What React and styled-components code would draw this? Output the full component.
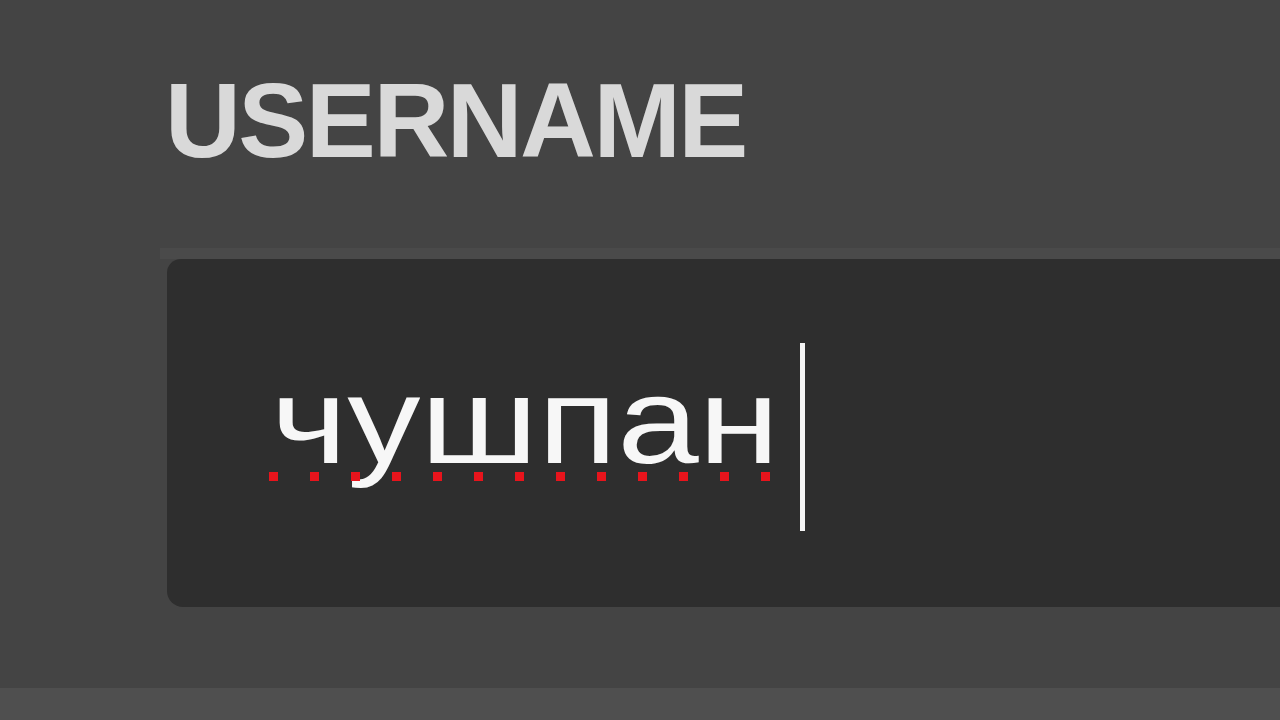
import React from 'react';
import styled, { createGlobalStyle } from 'styled-components';

const Global = createGlobalStyle`
  html, body {
    margin: 0;
    padding: 0;
    background: #444444;
    overflow: hidden;
  }
`;

const Page = styled.div`
  width: 1280px;
  height: 720px;
  display: flex;
  flex-direction: column;
  background: #444444;
  font-family: "Liberation Sans", Arial, sans-serif;
`;

const Label = styled.div`
  height: 248px;
  box-sizing: border-box;
  padding: 58px 0 0 165px;
  font-size: 105px;
  font-weight: 700;
  letter-spacing: -2.5px;
  line-height: 1.2;
  color: #d9d9d9;
`;

const FieldWrap = styled.div`
  height: 440px;
  box-sizing: border-box;
  margin-left: 160px;
  border-top: 11px solid #4a4a4a;
`;

const Field = styled.div`
  margin-left: 7px;
  height: 348px;
  background: #2e2e2e;
  border-radius: 14px 0 0 16px;
  display: flex;
  align-items: center;
  padding-left: 104px;
`;

const Value = styled.div`
  position: relative;
  width: 505px;
  height: 122px;
  margin-bottom: 24px;

  /* spell-check dots under the misspelled word */
  &::after {
    content: '';
    position: absolute;
    left: -2px;
    top: 112px;
    width: 501px;
    height: 9px;
    background-image: linear-gradient(90deg, #e8141c 9px, transparent 9px);
    background-size: 41px 9px;
    background-repeat: repeat-x;
  }
`;

const Text = styled.span`
  display: inline-block;
  font-size: 122px;
  line-height: 1;
  color: #f7f7f7;
  white-space: nowrap;
  transform: scaleX(1.2);
  transform-origin: left center;
`;

const Caret = styled.span`
  width: 5px;
  height: 188px;
  background: #f5f5f5;
  margin-left: 24px;
  margin-top: 8px;
`;

const BottomBand = styled.div`
  flex: 1;
  background: #4f4f4f;
`;

export default function App() {
  return (
    <Page>
      <Global />
      <Label>USERNAME</Label>
      <FieldWrap>
        <Field>
          <Value>
            <Text>чушпан</Text>
          </Value>
          <Caret />
        </Field>
      </FieldWrap>
      <BottomBand />
    </Page>
  );
}
